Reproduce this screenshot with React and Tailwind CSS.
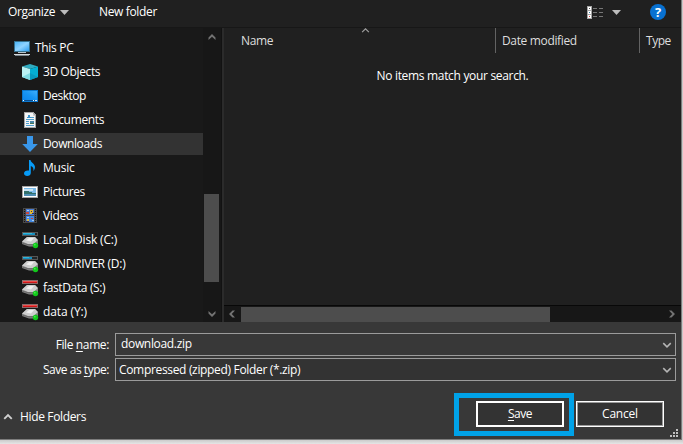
import React from "react";

const ThisPC = () => (
  <svg width="16" height="16" viewBox="0 0 16 16" shapeRendering="crispEdges">
    <defs>
      <linearGradient id="pc" x1="0" y1="0" x2="1" y2="1">
        <stop offset="0" stopColor="#4db5f8" />
        <stop offset=".5" stopColor="#8fd3ff" />
        <stop offset="1" stopColor="#2c9ff2" />
      </linearGradient>
    </defs>
    <rect x="0" y="1" width="16" height="11" fill="#35718f" />
    <rect x="1" y="2" width="14" height="9" fill="url(#pc)" />
    <rect x="7" y="12" width="2" height="1" fill="#8d989f" />
    <rect x="4" y="12" width="8" height="1" fill="#b7c4cb" />
    <rect x="0" y="14" width="16" height="1" fill="#d5d9dc" />
    <rect x="1" y="15" width="14" height="1" fill="#77838a" />
  </svg>
);

const Cube = () => (
  <svg width="16" height="16" viewBox="0 0 16 16">
    <path d="M0 2.5L8 0l8 2.5L8 5z" fill="#2fabc0" />
    <path d="M0 2.5L8 5v11l-8-3z" fill="#b9f1f3" />
    <path d="M8 5l8-2.5V13l-8 3z" fill="#04aed2" />
    <path d="M0 13l8-4v7z" fill="#7fdbe3" />
    <path d="M8 9l8 4-8 3z" fill="#079abf" />
  </svg>
);

const Desktop = () => (
  <svg width="16" height="16" viewBox="0 0 16 16">
    <defs>
      <linearGradient id="desk" x1="0" y1="1" x2="1" y2="0">
        <stop offset="0" stopColor="#0e86ee" />
        <stop offset=".5" stopColor="#1795f5" />
        <stop offset="1" stopColor="#3faefc" />
      </linearGradient>
    </defs>
    <g shapeRendering="crispEdges">
      <rect y="2" width="16" height="12" fill="#0b78d0" />
      <rect x="1" y="3" width="14" height="9" fill="url(#desk)" />
      <rect x="1" y="12" width="14" height="1" fill="#0a4e8e" />
      <rect x="1" y="12" width="1" height="1" fill="#fff" />
      <rect x="11" y="12" width="1" height="1" fill="#fff" />
      <rect x="13" y="12" width="2" height="1" fill="#d8eaff" />
    </g>
  </svg>
);

const Documents = () => (
  <svg width="16" height="16" viewBox="0 0 16 16" shapeRendering="crispEdges">
    <path d="M2 0h9l3 3v13H2z" fill="#a7a7a7" />
    <path d="M3 1h8v3h2v11H3z" fill="#f5f6f7" />
    <path d="M11 1v3h2z" fill="#cfcfcf" />
    <path d="M5 5h1V3h2v2h1v1H5z" fill="#3d94cb" />
    <path d="M9 5h3v1H9zM4 7h8v1H4zM4 9h3v1H4zM4 11h3v1H4zM4 13h8v1H4z" fill="#4e9fce" />
    <rect x="8" y="9" width="4" height="3" fill="#4a88a8" />
    <rect x="8" y="11" width="4" height="1" fill="#477657" />
  </svg>
);

const Downloads = () => (
  <svg width="16" height="16" viewBox="0 0 16 16">
    <path d="M5 0h6v8h4.800L8 16 .2 8H5z" fill="#3997ea" />
  </svg>
);

const Music = () => (
  <svg width="16" height="16" viewBox="0 0 16 16">
    <path
      d="M7 0h1.500c.3 2.600 4.500 3.800 4.500 7 0 1.800-.7 3-1.700 4 .6-2.500-.3-4.200-2.500-5v7c0 1.800-1.600 3-3.600 3C3.400 16 2 15 2 13.300c0-2 2.400-3.300 5-2.700z"
      fill="#079bf7"
    />
  </svg>
);

const Pictures = () => (
  <svg width="16" height="16" viewBox="0 0 16 16" shapeRendering="crispEdges">
    <rect y="2" width="16" height="12" fill="#a5a5a5" />
    <rect x="1" y="3" width="14" height="10" fill="#fff" />
    <rect x="2" y="4" width="12" height="8" fill="#7dbbe9" />
    <rect x="2" y="5" width="9" height="2" fill="#c9e4f4" />
    <path d="M2 7h3l3 1 3 1h3v3H2z" fill="#32706b" />
    <path d="M2 10h12v2H2z" fill="#4c8db3" />
  </svg>
);

const Videos = () => (
  <svg width="16" height="16" viewBox="0 0 16 16" shapeRendering="crispEdges">
    <rect x="1" y="0" width="14" height="15" fill="#484848" />
    <path d="M2 1h1v1H2zM2 3h1v1H2zM2 5h1v1H2zM2 7h1v1H2zM2 9h1v1H2zM2 11h1v1H2zM2 13h1v1H2zM13 1h1v1h-1zM13 3h1v1h-1zM13 5h1v1h-1zM13 7h1v1h-1zM13 9h1v1h-1zM13 11h1v1h-1zM13 13h1v1h-1z" fill="#111" />
    <rect x="4" y="1" width="8" height="6" fill="#4c7fd6" />
    <rect x="4" y="8" width="8" height="6" fill="#4389e4" />
    <path d="M8 2h3v4H8zM5 11h2v2H5z" fill="#e5b92d" />
    <path d="M4 4h3v2H4zM9 10h2v1H9z" fill="#c5483e" />
    <path d="M9 3h1v1H9zM10 5h2v1h-2zM4 13h3v1H4z" fill="#302b65" />
    <path d="M5 9h2v1H5zM10 12h2v1h-2zM5 2h2v1H5z" fill="#a7cdf2" />
  </svg>
);

const Drive = ({ red, fill = 12 }) => (
  <svg width="17" height="17" viewBox="0 0 17 17" className="-mr-px">
    <g shapeRendering="crispEdges">
      <rect y="0" width="16" height="4" fill={red ? "#8a6a6a" : "#565656"} />
      <rect x="1" y="1" width="14" height="2" fill="#202426" />
      <rect x="1" y="1" width={red ? 14 : fill} height="2" fill={red ? "#cc1518" : "#168dbd"} />
      <rect x="1" y="1" width={red ? 14 : fill - 3} height="1" fill={red ? "#ee4c4a" : "#32b6da"} />
    </g>
    <path d="M0 9.500L5 5h8l3 3.500V12l-4 2.500H7L0 12z" fill="#858585" />
    <path d="M0 9.500L5 5h8l3 3-4.500 4H6z" fill="#cdcdcd" />
    <path d="M4 8.500l3-2.500h5L9 9.500z" fill="#efefef" />
    <path d="M0 10.500l6 1.700h5v1H6.500L0 11.500z" fill="#686868" />
    <circle cx="13.500" cy="13.500" r="2.700" fill="#12c71b" />
    <circle cx="12.800" cy="12.700" r=".9" fill="#45e84b" />
  </svg>
);

const items = [
  ["3D Objects", <Cube />, "tracking-[-0.37px]"],
  ["Desktop", <Desktop />, "tracking-[-0.5px]"],
  ["Documents", <Documents />, "tracking-[-0.35px]"],
  ["Downloads", <Downloads />, "tracking-[-0.4px]"],
  ["Music", <Music />, "tracking-[-0.2px]"],
  ["Pictures", <Pictures />, "tracking-[-0.4px]"],
  ["Videos", <Videos />, "tracking-[-0.35px]"],
  ["Local Disk (C:)", <Drive />, "tracking-[-0.17px]"],
  ["WINDRIVER (D:)", <Drive fill={9} />, "tracking-[-0.27px]"],
  ["fastData (S:)", <Drive red />, "tracking-[-0.36px]"],
  ["data (Y:)", <Drive red />, "tracking-[-0.12px]"],
];

const Chevron = ({ dir, color = "#6e6e6e", w = 1, size = 8 }) => {
  const d = {
    up: "M1 5.500L4 2.500l3 3",
    down: "M1 2.500l3 3 3-3",
  }[dir];
  return (
    <svg width={size} height={size} viewBox="0 0 8 8" fill="none" stroke={color} strokeWidth={w}>
      <path d={d} />
    </svg>
  );
};

const ScrollArrow = ({ dir }) => {
  const d = {
    up: "M.5 4.500L4 1l3.500 3.500V7L4 3.800.5 7z",
    down: "M.5 3.500L4 7l3.500-3.500V1L4 4.200.5 1z",
    left: "M4.500.5L1 4l3.500 3.500H7L3.800 4 7 .5z",
    right: "M3.500.5L7 4 3.500 7.500H1L4.200 4 1 .5z",
  }[dir];
  return (
    <svg width="8" height="8" viewBox="0 0 8 8" fill="#737373">
      <path d={d} />
    </svg>
  );
};

const Caret = () => (
  <svg width="9" height="5" viewBox="0 0 9 5">
    <path d="M0 0h9L4.500 5z" fill="#bdbdbd" />
  </svg>
);

function Toolbar() {
  return (
    <div className="flex h-[28px] shrink-0 items-center border-b border-[#171717] bg-[#202020] pb-[3px] pl-2">
      <span className="w-[52px] tracking-[-0.4px]">Organize</span>
      <Caret />
      <span className="ml-[30px] tracking-[-0.35px]">New folder</span>
      <div className="ml-auto flex items-center pr-[15px]">
        <svg width="16" height="13" viewBox="0 0 16 13" shapeRendering="crispEdges">
          <path d="M0 0h5v13H0z" fill="#a5a5a5" />
          <path d="M1 1h3v3H1zM1 5h3v3H1zM1 9h3v3H1z" fill="#fff" />
          <path d="M2 2h1v1H2z" fill="#555" />
          <path d="M2 6h1v1H2z" fill="#3d82ab" />
          <path d="M2 10h1v1H2z" fill="#d44444" />
          <path d="M6 2h4v1H6zM12 2h4v1h-4zM6 6h4v1H6zM12 6h4v1h-4zM6 10h4v1H6zM12 10h4v1h-4z" fill="#777" />
        </svg>
        <span className="ml-[9px]"><Caret /></span>
        <span className="ml-[29px] flex size-[16px] items-center justify-center rounded-full bg-[#0871d1] text-[13px] leading-none font-bold text-white">
          ?
        </span>
      </div>
    </div>
  );
}

function Sidebar() {
  return (
    <div className="flex w-[224px] shrink-0 bg-[#191919]">
      <div className="w-[203px] pt-[8px]">
        <div className="flex h-6 items-center gap-[5px] pl-[14px]">
          <ThisPC />
          <span className="tracking-[-0.3px]">This PC</span>
        </div>
        {items.map(([label, icon, tracking]) => (
          <div key={label} className="flex h-6 items-center pb-px pt-px">
            <div className={"flex h-[22px] w-full items-center gap-[5px] pl-[22px] " + (label === "Downloads" ? "bg-[#333333]" : "")}>
              {icon}
              <span className={tracking}>{label}</span>
            </div>
          </div>
        ))}
      </div>
      <div className="flex w-[18px] flex-col items-center bg-[#171717] pt-[5px] pr-px pb-[4px]">
        <ScrollArrow dir="up" />
        <div className="mt-[153px] mb-auto h-[88px] w-[15px] bg-[#4d4d4d]" />
        <ScrollArrow dir="down" />
      </div>
      <div className="w-[3px] border-l border-[#121212] bg-[#2b2b2b]" />
    </div>
  );
}

function FileList() {
  return (
    <div className="flex min-w-0 flex-1 flex-col bg-[#202020]">
      <div className="flex h-[25px] text-[#dedede]">
        <div className="relative flex w-[272px] items-center border-r border-[#636363] pt-px pl-[17px]">
          <span className="tracking-[-0.35px]">Name</span>
          <span className="absolute top-[-2px] left-[137px]">
            <Chevron dir="up" color="#a0a0a0" w={1} size={9} />
          </span>
        </div>
        <div className="flex w-[144px] items-center border-r border-[#636363] pt-px pl-[6px]">
          <span className="tracking-[-0.35px]">Date modified</span>
        </div>
        <div className="flex items-center pt-px pl-[6px]">
          <span className="tracking-[-0.45px]">Type</span>
        </div>
      </div>
      <div className="flex-1 pt-[15px] text-center text-white">
        <span className="tracking-[-0.32px]">No items match your search.</span>
      </div>
      <div className="flex h-[17px] items-center border-t border-[#080808] bg-[#171717] pr-[5px] pl-[4px]">
        <ScrollArrow dir="left" />
        <div className="ml-[5px] h-[15px] w-[309px] bg-[#4d4d4d]" />
        <span className="ml-auto"><ScrollArrow dir="right" /></span>
      </div>
    </div>
  );
}

function Field({ label, labelTracking, value, inset, bg, tracking }) {
  return (
    <div className="flex h-[23px]">
      <div className={"w-[115px] pt-[4px] pr-[6px] text-right " + labelTracking}>{label}</div>
      <div className={"flex w-[561px] items-start justify-between border border-[#9b9b9b] pr-[3px] " + bg}>
        <span className={inset + " " + tracking}>{value}</span>
        <span className="self-center"><Chevron dir="down" color="#b5b5b5" w={1.2} size={10} /></span>
      </div>
    </div>
  );
}

function Footer() {
  return (
    <div className="flex flex-1 flex-col bg-[#383838] pt-[11px]">
      <div className="flex flex-col gap-[2px]">
        <Field
          label={<>File <u className="underline-offset-2">n</u>ame:</>}
          labelTracking="tracking-[-0.38px]"
          value="download.zip"
          inset="pt-[2px] pl-[5px]"
          bg="bg-[#383838]"
          tracking="tracking-[-0.33px]"
        />
        <Field
          label={<>Save as <u className="underline-offset-2">t</u>ype:</>}
          labelTracking="tracking-[-0.47px]"
          value="Compressed (zipped) Folder (*.zip)"
          inset="pt-[3px] pl-[3px]"
          bg="bg-[#333333]"
          tracking="tracking-[-0.33px]"
        />
      </div>
      <div className="flex flex-1 items-start pt-[12px]">
        <div className="flex w-[454px] items-center gap-[7px] pt-[16px] pl-[3px]">
          <Chevron dir="up" color="#d0d0d0" w={1.5} size={10} />
          <span className="tracking-[-0.35px]">Hide Folders</span>
        </div>
        <div className="flex h-[43px] w-[120px] items-start justify-end border-[5px] border-[#00a2e8] pt-[3px] pr-[5px]">
          <button className="h-[26px] w-[88px] border-2 border-white bg-[#333333] tracking-[-0.45px]">
            <u className="underline-offset-2">S</u>ave
          </button>
        </div>
        <div className="ml-[2px] mt-[8px] h-[26px] w-[88px] border border-white">
          <button className="size-full border border-[#9b9b9b] bg-[#333333] tracking-[-0.2px]">Cancel</button>
        </div>
        <svg width="8" height="8" viewBox="0 0 8 8" className="mt-[36px] ml-[6px]" fill="#bfbfbf" shapeRendering="crispEdges">
          <path d="M6 0h2v2H6zM3 3h2v2H3zM6 3h2v2H6zM0 6h2v2H0zM3 6h2v2H3zM6 6h2v2H6z" />
        </svg>
      </div>
    </div>
  );
}

export default function App() {
  return (
    <div className="h-[444px] w-[683px] overflow-hidden bg-gradient-to-b from-[#c8c8c8] from-[99%] to-[#e5e5e5] font-['Open_Sans',sans-serif] text-[12px] leading-[16px] whitespace-nowrap text-white">
      <div className="flex h-[440px] w-[682px] flex-col border-r border-b border-[#7c7c7c]">
        <Toolbar />
        <div className="flex h-[294px] shrink-0">
          <Sidebar />
          <FileList />
        </div>
        <Footer />
      </div>
    </div>
  );
}
